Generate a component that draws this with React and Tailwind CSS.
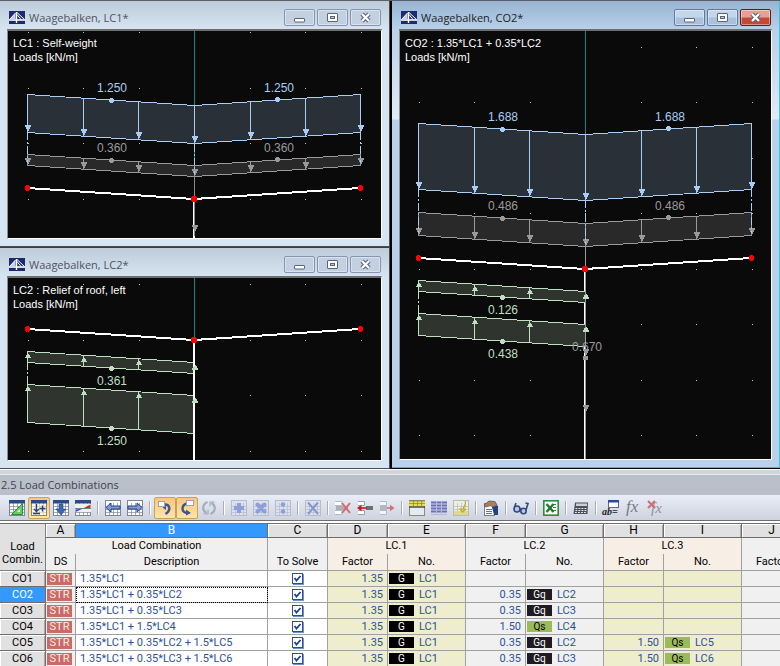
import React from "react";

const BLUE = { line: "#a9cdf3", fill: "#2a3038" };
const GREY = { line: "#9a9a9c", fill: "#292929" };
const GREEN = { line: "#bfdfc1", fill: "#2f342f" };

const BridgeIcon = () => (
  <svg width="16" height="13" viewBox="0 0 16 13" className="block shrink-0" aria-hidden="true">
    <rect width="16" height="13" fill="#1d2a72" />
    <path d="M6.500 2L1 8H6.500Z" fill="#c9d0e8" />
    <path d="M0 9H16" stroke="#fff" strokeWidth="1.600" />
    <path d="M7.500 1V12" stroke="#fff" strokeWidth="1.400" />
    <path d="M8 1.500L15.500 8.500M8 3.500L12 8.500M6.500 2L0.500 8.500" stroke="#fff" strokeWidth="1" fill="none" />
  </svg>
);

function Arrow({ x, y, up, color }) {
  const d = up
    ? `M${x} ${y}h1v1h1v1h1v2h1v1h-6v-1h1v-2h1v-1h1z`
    : `M${x - 2} ${y}h6v2h-1v2h-1v2h-2v-2h-1v-2h-1z`;
  return <path d={d} fill={color} />;
}

/* A distributed load over one or both halves of the roof. */
function Band({ x, top, h, c, up, both, label, labelY, dashTo }) {
  const mid = x + 167;
  const end = x + 333;
  const xs = both ? [0, 56, 111, 167, 223, 278, 333] : [0, 56, 111, 167];
  const yAt = (dx) => Math.round(top + (dx <= 167 ? dx : 333 - dx) * 0.066);
  const outline = both
    ? `M${x} ${top}L${mid} ${top + 11}L${end} ${top}V${top + h}L${mid} ${top + h + 11}L${x} ${top + h}Z`
    : `M${x} ${top}L${mid} ${top + 11}V${top + h + 11}L${x} ${top + h}Z`;
  const marks = both ? [84, 250] : [84];
  const labels = both ? [70, 237] : [70];
  return (
    <g>
      <path d={outline} transform="translate(.5 .5)" fill={c.fill} stroke={c.line} />
      {xs.map((dx) => (
        <g key={dx}>
          <path d={`M${x + dx + 0.5} ${yAt(dx)}v${h}`} stroke={c.line} />
          <Arrow x={x + dx} y={up ? yAt(dx) + 2 : yAt(dx) + h - 7} up={up} color={c.line} />
        </g>
      ))}
      {marks.map((dx) => (
        <circle key={dx} cx={x + dx + 0.5} cy={yAt(dx) + (up ? h : 0) + 0.5} r="2.5" fill={c.line} />
      ))}
      {dashTo &&
        [0, 167, both ? 333 : 0].map((dx, i) => (
          <path
            key={i}
            d={`M${x + dx + 0.5} ${yAt(dx) + h}V${dashTo + yAt(dx) - top}`}
            stroke={c.line}
            strokeDasharray="8 2 2 2"
          />
        ))}
      {labels.map((dx) => (
        <text key={dx} x={x + dx} y={labelY} fontSize="12" fill={c.line}>
          {label}
        </text>
      ))}
    </g>
  );
}

function Beam({ x, y }) {
  return (
    <g>
      <path d={`M${x} ${y}L${x + 167} ${y + 11}L${x + 333} ${y}`} stroke="#fff" strokeWidth="2" fill="none" />
      <path d={`M${x + 167} ${y + 11}V600`} stroke="#fff" strokeWidth="2" />
    </g>
  );
}

const Joints = ({ x, y }) => (
  <g fill="#ff0000">
    <circle cx={x + 0.5} cy={y} r="3" />
    <circle cx={x + 167} cy={y + 11} r="3" />
    <circle cx={x + 333.5} cy={y} r="3" />
  </g>
);

function GridDots({ x, ys }) {
  return (
    <g fill="#b9c9b9">
      {ys.map((y) =>
        [1, 56, 112, 167, 223, 278, 334].map((dx) => <rect key={`${dx}-${y}`} x={x + dx} y={y} width="1" height="1" />)
      )}
    </g>
  );
}

function Caption({ lines }) {
  return lines.map((t, i) => (
    <text key={t} x="5" y={16 + i * 14} fontSize="11" fill="#fff">
      {t}
    </text>
  ));
}

const Canvas = ({ title, children }) => (
  <svg
    role="img"
    aria-label={title}
    className="block h-full w-full font-['Liberation_Sans',Arial,sans-serif]"
    shapeRendering="crispEdges"
  >
    {children}
  </svg>
);

function SelfWeight() {
  return (
    <Canvas title="LC1 loads">
      <GridDots x={19} ys={[1, 57, 112, 168]} />
      <Beam x={19} y={157} />
      <Band x={19} top={123} h={11} c={GREY} both label="0.360" labelY={121} />
      <Band x={19} top={63} h={38} c={BLUE} both label="1.250" labelY={61} dashTo={132} />
      <path d="M186.500 0V74M186.500 113V134" stroke="#0c8a86" />
      <path d="M186.500 113V134" stroke={BLUE.line} strokeDasharray="8 2 2 2" />
      <path d="M186.500 145V205" stroke="#8a8a8a" />
      <Arrow x={186} y={194} color={GREY.line} />
      <Joints x={19} y={157} />
      <Caption lines={["LC1 : Self-weight", "Loads [kN/m]"]} />
    </Canvas>
  );
}

function RoofRelief() {
  return (
    <Canvas title="LC2 loads">
      <GridDots x={19} ys={[6, 62, 117, 173]} />
      <path d="M186.500 0V62" stroke="#0c8a86" />
      <Beam x={19} y={51} />
      <Band x={19} top={73} h={11} c={GREEN} up label="0.361" labelY={107} dashTo={106} />
      <Band x={19} top={106} h={38} c={GREEN} up label="1.250" labelY={167} />
      <path d="M186 62V190" stroke="#fff" strokeWidth="2" />
      <Arrow x={186} y={87} up color={GREEN.line} />
      <Arrow x={186} y={120} up color={GREEN.line} />
      <Joints x={19} y={51} />
      <Caption lines={["LC2 : Relief of roof, left", "Loads [kN/m]"]} />
    </Canvas>
  );
}

function Combination() {
  return (
    <Canvas title="CO2 loads">
      <GridDots x={18} ys={[16, 71, 127, 182, 238, 293, 349, 404]} />
      <Beam x={18} y={227} />
      <Band x={18} top={181} h={23} c={GREY} both label="0.486" labelY={179} />
      <Band x={18} top={92} h={66} c={BLUE} both label="1.688" labelY={90} dashTo={202} />
      <Band x={18} top={249} h={11} c={GREEN} up label="0.126" labelY={283} dashTo={282} />
      <Band x={18} top={282} h={22} c={GREEN} up label="0.438" labelY={327} />
      <path d="M185.500 0V103" stroke="#0c8a86" />
      <path d="M185.500 214V430" stroke="#9a9a9c" />
      <Arrow x={185} y={263} up color={GREEN.line} />
      <Arrow x={185} y={296} up color={GREEN.line} />
      <Arrow x={185} y={318} color={GREY.line} />
      <rect x="183" y="325" width="5" height="4" fill={GREY.line} />
      <Arrow x={185} y={374} color={GREY.line} />
      <text x="172" y="320" fontSize="12" fill={GREY.line}>
        0.670
      </text>
      <Joints x={18} y={227} />
      <Caption lines={["CO2 : 1.35*LC1 + 0.35*LC2", "Loads [kN/m]"]} />
    </Canvas>
  );
}

const GLYPHS = {
  Minimize: <rect x="9.500" y="8.500" width="10" height="3.500" rx="0.500" fill="#fff" stroke="#5c6478" />,
  Maximize: (
    <g fill="#fff" stroke="#5c6478">
      <rect x="9.500" y="3.500" width="10" height="8" rx="0.500" />
      <rect x="12.500" y="6.500" width="4" height="2" fill="#b9c8dc" />
    </g>
  ),
  Close: (
    <g fill="none">
      <path d="M11 4L18 11M18 4L11 11" stroke="#5c6478" strokeWidth="4.400" />
      <path d="M11 4L18 11M18 4L11 11" stroke="#fff" strokeWidth="2.200" />
    </g>
  ),
};

function WindowButton({ name, active }) {
  const tone =
    active && name === "Close"
      ? "border-[#5d1f24] bg-linear-to-b from-[#e5a294] from-45% to-[#c04a34] to-55%"
      : active
        ? "border-[#62799b] bg-linear-to-b from-[#c3d6ea] from-45% to-[#a9c1dc] to-55%"
        : "border-[#8794b0] bg-[#c2d0e1]";
  return (
    <button
      type="button"
      aria-label={name}
      className={`h-[17px] w-[31px] rounded-xs border shadow-[inset_0_0_0_1px_#ffffff66] ${tone}`}
    >
      <svg width="29" height="15" viewBox="0 0 29 15" className="block">
        {GLYPHS[name]}
      </svg>
    </button>
  );
}

function DocWindow({ title, active, className, children }) {
  const skin = active
    ? "border-r-[#3cc6e4] border-b-[#2fc3e0] bg-[linear-gradient(to_bottom,#98b4d2_0,#b9d1ea_29px,#e0ebf7_118px,#b9d1ea_119px)]"
    : "border-r-[#4a4d52] border-b-[#4a4d52] bg-[linear-gradient(to_bottom,#becbd9_0,#d7e4f2_29px)]";
  return (
    <section className={`flex min-w-0 flex-col border-r border-b pr-[7px] pb-[7px] pl-[7px] ${skin} ${className}`}>
      <header className="flex h-[28px] shrink-0 items-center gap-1 pt-[5px] pr-px pl-[2px]">
        <BridgeIcon />
        <h2
          className={`flex-1 truncate font-['Open_Sans','Noto_Sans',sans-serif] text-[11px] leading-4 ${active ? "text-[#1b1f26]" : "text-[#4d545e]"}`}
        >
          {title}
        </h2>
        <div className="flex gap-[2px]">
          <WindowButton name="Minimize" active={active} />
          <WindowButton name="Maximize" active={active} />
          <WindowButton name="Close" active={active} />
        </div>
      </header>
      <div className="min-h-0 flex-1 border-t-2 border-r border-b border-l border-t-[#6e6e6e] border-r-white border-b-white border-l-[#8c8c8c] bg-[#0a0a0a]">
        {children}
      </div>
    </section>
  );
}

/* Small spreadsheet used as the base of many toolbar icons. */
const Sheet = ({ head = "#2c4a86", line = "#7d8794", bg = "#fff" }) => (
  <g>
    <rect x="0.500" y="0.500" width="15" height="15" fill={bg} stroke={line} />
    <path d="M0.500 6.500H15.500M0.500 9.500H15.500M0.500 12.500H15.500M4.500 3V15.500M8.500 3V15.500M12.500 3V15.500" stroke={line} strokeWidth="0.700" fill="none" />
    {head && <rect width="16" height="3.500" fill={head} />}
  </g>
);
const PaleSheet = () => <Sheet head="" line="#b5bccb" bg="#dce1ec" />;

const ICONS = {
  units: (
    <g>
      <Sheet />
      <path d="M2.500 14.500L13.500 3.500V14.500Z" fill="#63cf63" stroke="#2b8f2f" />
      <path d="M8 12L11 9V12Z" fill="#e9fbe9" />
    </g>
  ),
  insertRow: (
    <g>
      <Sheet />
      <rect x="1" y="4" width="14" height="11" fill="#fff3d8" opacity=".6" />
      <path d="M5.500 4V11M3 9L5.500 11.500L8 9M2 13.500H9M8.500 8.500H14.500M11.500 5.500V11.500" stroke="#25407f" strokeWidth="1.300" fill="none" />
    </g>
  ),
  down: (
    <g>
      <Sheet />
      <path d="M6 4H10V9H13L8 15L3 9H6Z" fill="#3f66b4" stroke="#25407f" strokeWidth=".6" />
    </g>
  ),
  diagram: (
    <g>
      <Sheet />
      <rect x="0" y="4" width="16" height="8" fill="#eef0f4" />
      <path d="M0.500 12V9.500L8 8.500Z" fill="#2747d0" />
      <path d="M15.500 4.500V8L8 8.500Z" fill="#e02222" />
      <path d="M0 8.500H16" stroke="#555" strokeWidth=".7" />
    </g>
  ),
  left: (
    <g>
      <Sheet head="" />
      <path d="M1 7.500L6 3V6H15V9H6V12Z" fill="#7f9be0" stroke="#25407f" />
    </g>
  ),
  right: (
    <g>
      <Sheet head="" />
      <path d="M15 7.500L10 3V6H1V9H10V12Z" fill="#7f9be0" stroke="#25407f" />
    </g>
  ),
  undoBox: (
    <g>
      <path d="M7 4.500C13 4 14.500 10 8.500 14" stroke="#3c5690" strokeWidth="2.400" fill="none" />
      <path d="M5.500 7.500L9 6V10Z" fill="#3c5690" />
      <rect x="1.500" y="1.500" width="6" height="5" fill="#fff" stroke="#9aa4ba" />
    </g>
  ),
  redoBox: (
    <g>
      <path d="M8 3.500C2 5 2 12 8 13" stroke="#3c5690" strokeWidth="2.400" fill="none" />
      <path d="M7 9.500L12 13L7 15.500Z" fill="#3c5690" />
      <rect x="7.500" y="0.500" width="7" height="5" fill="#fff" stroke="#9aa4ba" />
    </g>
  ),
  refresh: (
    <g fill="none" stroke="#a2adbd" strokeWidth="2.200">
      <path d="M6.500 2C0.500 4.500 1.500 11 5.500 13M9.500 14C15.500 11.500 14.500 5 10.500 3" />
      <path d="M2.500 14H7V9.500M13.500 2H9V6.500" strokeWidth="1.200" />
    </g>
  ),
  add: (
    <g>
      <PaleSheet />
      <path d="M8 3V13M3 8H13" stroke="#8c9fdc" strokeWidth="4" />
    </g>
  ),
  multiply: (
    <g>
      <PaleSheet />
      <path d="M4.500 4.500L11.500 11.500M11.500 4.500L4.500 11.500" stroke="#8c9fdc" strokeWidth="4" strokeLinecap="round" />
    </g>
  ),
  divide: (
    <g>
      <PaleSheet />
      <circle cx="8" cy="4.500" r="2.300" fill="#8c9fdc" />
      <circle cx="8" cy="11.500" r="2.300" fill="#8c9fdc" />
    </g>
  ),
  clear: (
    <g>
      <PaleSheet />
      <path d="M3 2.500L13 14M13 2.500L3 14" stroke="#8496cc" strokeWidth="2" />
    </g>
  ),
  deleteRow: (
    <g>
      <path d="M0 1.500H7V5.500H0M0 10.500H7V14.500H0" fill="#fff" stroke="#b4bac5" />
      <rect x="1" y="6" width="12" height="4" fill="#a9afb8" />
      <path d="M7 3L15 13M15 3L7 13" stroke="#d46a72" strokeWidth="2" />
    </g>
  ),
  rowIn: (
    <g>
      <path d="M1 1.500H7.500V5.500H1M1 10.500H7.500V14.500H1" fill="#fff" stroke="#9ba2ad" />
      <rect x="9" y="6" width="7" height="4" fill="#6b6f76" />
      <path d="M10 8H3" stroke="#c01c1c" strokeWidth="1.600" />
      <path d="M0 8L4.500 4.800V11.200Z" fill="#c01c1c" />
    </g>
  ),
  rowOut: (
    <g>
      <path d="M1 1.500H7.500V5.500H1M1 10.500H7.500V14.500H1" fill="#f4f5f8" stroke="#b4bac5" />
      <rect x="1" y="6" width="7" height="4" fill="#b3b8c0" />
      <path d="M8 8H12" stroke="#cf727a" strokeWidth="1.600" />
      <path d="M15.500 8L11 4.800V11.200Z" fill="#cf727a" />
    </g>
  ),
  yellowTable: (
    <g>
      <rect x="0.500" y="0.500" width="15" height="15" fill="#e4ebf2" stroke="#8b8b6a" />
      <rect y="1" width="16" height="5.500" fill="#e9dc59" />
      <path d="M0 1H16M0 3.500H16M4.500 1V6M8.500 1V6M12.500 1V6" stroke="#8a8335" strokeWidth=".7" />
      <path d="M0 7H16" stroke="#333" strokeWidth="1.300" />
    </g>
  ),
  blueTable: (
    <g>
      <rect y="1" width="16" height="14" fill="#d3d6ee" />
      <path d="M0 2.500H16M0 5.500H16M0 8.500H16M0 11.500H16" stroke="#6d70b8" strokeWidth="2" />
      <path d="M0 14.500H16M5.500 1V15M10.500 1V15" stroke="#b6bad6" />
    </g>
  ),
  pick: (
    <g>
      <Sheet head="" line="#b7bda9" bg="#eceee8" />
      <rect x="1" y="11" width="14" height="4" fill="#dfd88c" />
      <path d="M12 1C14 5 10 6 10.500 9H7L9.500 12L12.500 9" stroke="#b8a93a" strokeWidth="1.200" fill="#ecd95a" />
    </g>
  ),
  properties: (
    <g>
      <rect x="1.500" y="3.500" width="10" height="12" fill="#fff" stroke="#7a7f88" />
      <path d="M3 9.500H9M3 11.500H9M3 13.500H9" stroke="#6c7687" />
      <path d="M1 5L6 1L12 1.500L14 5L10 8L8 5.500L2.500 7Z" fill="#a88060" stroke="#5b4636" strokeWidth=".7" />
      <path d="M9 7L15 5.500V15H11Z" fill="#27437f" />
    </g>
  ),
  glasses: (
    <g fill="#b6c8ea" stroke="#33497f" strokeWidth="1.600">
      <circle cx="4" cy="9" r="3" />
      <circle cx="10.500" cy="11" r="2.700" />
      <path d="M6.500 8.500L8.500 9.500M1.500 7L3 3M13 10L15 3.500L12.500 3" fill="none" />
    </g>
  ),
  excel: (
    <g>
      <rect x="0.800" y="0.800" width="14.400" height="14.400" fill="#fff" stroke="#2f8a3a" strokeWidth="1.600" />
      <path d="M10 4.500H13M10 7.500H13M10 10.500H13" stroke="#2f8a3a" />
      <path d="M3.500 4L10.500 12M10.500 4L3.500 12" stroke="#1f7a2d" strokeWidth="2.400" />
    </g>
  ),
  calculator: (
    <g>
      <path d="M2 2.500H15L14.500 14H0.500Z" fill="#4d515a" />
      <rect x="3" y="3.500" width="11" height="2.500" fill="#c7d3dc" />
      <path d="M2.500 8.500H14M2.500 10.500H14M2 12.500H14" stroke="#e6e8ec" strokeWidth="1.100" strokeDasharray="1.800 1.200" />
    </g>
  ),
  formulaName: (
    <g>
      <rect x="5.500" y="0.500" width="10" height="7" fill="#fff" stroke="#667" />
      <rect x="5" width="11" height="2.500" fill="#2c4a9a" />
      <text x="-1" y="15" fontSize="10" fontWeight="bold" fontStyle="italic" fill="#222">
        ab=
      </text>
    </g>
  ),
  fx: (
    <text x="1" y="12" fontSize="17" fontStyle="italic" fill="#757b85">
      fx
    </text>
  ),
  noFx: (
    <g>
      <text x="4" y="13" fontSize="15" fontStyle="italic" fill="#8d939d">
        fx
      </text>
      <path d="M1 1L8 8M8 1L1 8" stroke="#d46a72" strokeWidth="2" />
    </g>
  ),
};

const TOOL_GROUPS = [
  ["units", "insertRow", "down", "diagram"],
  ["left", "right"],
  ["undoBox", "redoBox", "refresh"],
  ["add", "multiply", "divide"],
  ["clear"],
  ["deleteRow", "rowIn", "rowOut"],
  ["yellowTable", "blueTable", "pick"],
  ["properties"],
  ["glasses"],
  ["excel"],
  ["calculator"],
  ["formulaName", "fx", "noFx"],
];
const PRESSED = ["insertRow", "undoBox", "redoBox"];

function Toolbar() {
  return (
    <div
      role="toolbar"
      aria-label="Table tools"
      className="flex h-[25px] items-center overflow-hidden bg-linear-to-b from-[#e9edf7] to-[#cdd3df] pl-[6px]"
    >
      {TOOL_GROUPS.map((group, i) => (
        <React.Fragment key={group[0]}>
          {i > 0 && <span className="mx-[3px] h-[14px] w-[2px] shrink-0 border-r border-l border-r-white border-l-[#a7adba]" />}
          {group.map((name) => (
            <button
              key={name}
              type="button"
              aria-label={name}
              aria-pressed={PRESSED.includes(name)}
              className={`flex h-[22px] w-[22px] shrink-0 items-center justify-center rounded-xs border ${
                PRESSED.includes(name)
                  ? "border-[#c8a25c] bg-linear-to-b from-[#fbc77c] to-[#ffe6a4]"
                  : "border-transparent"
              }`}
            >
              <svg width="16" height="16" viewBox="0 0 16 16" className="block overflow-visible font-['Liberation_Serif',serif]">
                {ICONS[name]}
              </svg>
            </button>
          ))}
        </React.Fragment>
      ))}
    </div>
  );
}

const ROWS = [
  { id: "CO1", desc: "1.35*LC1", loads: [["1.35", "G", "LC1"]] },
  { id: "CO2", desc: "1.35*LC1 + 0.35*LC2", loads: [["1.35", "G", "LC1"], ["0.35", "Gq", "LC2"]] },
  { id: "CO3", desc: "1.35*LC1 + 0.35*LC3", loads: [["1.35", "G", "LC1"], ["0.35", "Gq", "LC3"]] },
  { id: "CO4", desc: "1.35*LC1 + 1.5*LC4", loads: [["1.35", "G", "LC1"], ["1.50", "Qs", "LC4"]] },
  { id: "CO5", desc: "1.35*LC1 + 0.35*LC2 + 1.5*LC5", loads: [["1.35", "G", "LC1"], ["0.35", "Gq", "LC2"], ["1.50", "Qs", "LC5"]] },
  { id: "CO6", desc: "1.35*LC1 + 0.35*LC3 + 1.5*LC6", loads: [["1.35", "G", "LC1"], ["0.35", "Gq", "LC3"], ["1.50", "Qs", "LC6"]] },
];

const TAGS = {
  G: "bg-black text-white",
  Gq: "bg-[#1f1b22] text-white",
  Qs: "bg-[#9bbb59] text-black",
};
const LINE = "border-[#a0a0a0]";

function LoadCells({ load, tint }) {
  const bg = tint ? "bg-[#eeeecf]" : "bg-[#f0f0f0]";
  return (
    <>
      <td className={`border-r border-b p-0 pr-1 text-right ${LINE} ${bg}`}>{load && load[0]}</td>
      <td className={`border-r border-b p-0 ${LINE} ${bg}`}>
        {load && (
          <div className="flex h-[15px] items-center gap-[5px] pl-px">
            <span className={`h-[11px] w-[25px] text-center text-[10px] leading-[11px] ${TAGS[load[1]]}`}>{load[1]}</span>
            {load[2]}
          </div>
        )}
      </td>
    </>
  );
}

function CombinationTable() {
  const th = "p-0 font-normal text-black";
  return (
    <div className="overflow-hidden border-t border-[#6e6e6e]">
      <table className="w-[802px] table-fixed border-separate border-spacing-0 font-['Roboto','Liberation_Sans',sans-serif] text-[11px] leading-[14px] text-[#2b50a0]">
        <colgroup>
          <col className="w-[46px]" />
          <col className="w-[30px]" />
          <col className="w-[192px]" />
          <col className="w-[60px]" />
          <col className="w-[60px]" />
          <col className="w-[78px]" />
          <col className="w-[60px]" />
          <col className="w-[78px]" />
          <col className="w-[60px]" />
          <col className="w-[78px]" />
          <col className="w-[60px]" />
        </colgroup>
        <thead>
          <tr className="h-[14px]">
            <th
              rowSpan={3}
              scope="col"
              className="border-r border-b border-[#808080] bg-[#e1e1e1] p-0 pt-3 leading-[13px] font-normal text-black"
            >
              Load
              <br />
              Combin.
            </th>
            {["A", "B", "C", "D", "E", "F", "G", "H", "I", "J"].map((c) => (
              <th
                key={c}
                scope="col"
                className={`h-[14px] border-r border-b border-[#6e6e6e] p-0 text-[12px] leading-[13px] font-normal ${
                  c === "B" ? "bg-[#3399ff] text-white" : "bg-[#e1e1e1] text-black shadow-[inset_1px_1px_0_#fff,inset_-1px_0_0_#a8a8a8]"
                }`}
              >
                {c}
              </th>
            ))}
          </tr>
          <tr className="h-[16px]">
            <th colSpan={2} className={`${th} border-r bg-[#f0f0f0] ${LINE}`}>Load Combination</th>
            <th className={`${th} border-r bg-[#f0f0f0] ${LINE}`} />
            <th colSpan={2} className={`${th} border-r bg-[#f7efe6] ${LINE}`}>LC.1</th>
            <th colSpan={2} className={`${th} border-r bg-[#f0f0f0] ${LINE}`}>LC.2</th>
            <th colSpan={2} className={`${th} border-r bg-[#f7efe6] ${LINE}`}>LC.3</th>
            <th className={`${th} bg-[#f0f0f0]`} />
          </tr>
          <tr className="h-[17px]">
            {["DS", "Description", "To Solve", "Factor", "No.", "Factor", "No.", "Factor", "No.", "Factor"].map((t, i) => (
              <th
                key={i}
                scope="col"
                className={`${th} border-r border-b ${LINE} ${[3, 4, 7, 8].includes(i) ? "bg-[#f7efe6]" : "bg-[#f0f0f0]"}`}
              >
                {t}
              </th>
            ))}
          </tr>
        </thead>
        <tbody>
          {ROWS.map((row) => {
            const current = row.id === "CO2";
            return (
              <tr key={row.id} className="h-[16px]">
                <th
                  scope="row"
                  className={`h-[16px] border-r border-b border-[#6e6e6e] p-0 font-normal ${
                    current ? "bg-[#3399ff] text-white" : "bg-[#e1e1e1] text-black shadow-[inset_1px_1px_0_#fff,inset_-1px_0_0_#a8a8a8]"
                  }`}
                >
                  {row.id}
                </th>
                <td className={`border-r border-b bg-[#f0f0f0] p-0 pl-px ${LINE}`}>
                  <span className="block h-[12px] w-[25px] bg-[#cb6a67] text-center text-[11px] leading-[12px] text-[#ffe9e9]">STR</span>
                </td>
                <td
                  className={`border-r border-b bg-white p-0 pl-1 ${LINE} ${
                    current ? "outline-1 -outline-offset-1 outline-dotted outline-black" : ""
                  }`}
                >
                  {row.desc}
                </td>
                <td className={`border-r border-b bg-white p-0 ${LINE}`}>
                  <label className="relative mx-auto block h-[11px] w-[11px]">
                    <input
                      type="checkbox"
                      defaultChecked
                      aria-label={`Solve ${row.id}`}
                      className="peer block h-[11px] w-[11px] appearance-none border border-[#2b50a0] bg-white shadow-[1px_1px_0_#6f8fd0]"
                    />
                    <svg viewBox="0 0 11 11" className="pointer-events-none absolute inset-0 hidden h-[11px] w-[11px] peer-checked:block">
                      <path d="M2.500 5L4.500 7.500L8.500 3" stroke="#1d3f96" strokeWidth="1.800" fill="none" />
                    </svg>
                  </label>
                </td>
                <LoadCells load={row.loads[0]} tint />
                <LoadCells load={row.loads[1]} />
                <LoadCells load={row.loads[2]} tint />
                <td className={`border-r border-b bg-[#f0f0f0] ${LINE}`} />
              </tr>
            );
          })}
        </tbody>
      </table>
    </div>
  );
}

export default function App() {
  return (
    <main className="w-full overflow-hidden bg-[#d0d4dc]">
      <div className="grid grid-cols-2 border-t border-[#5b6066] bg-[#3a3d42]">
        <div className="flex min-w-0 flex-col gap-px">
          <DocWindow title="Waagebalken, LC1*" className="h-[246px]">
            <SelfWeight />
          </DocWindow>
          <DocWindow title="Waagebalken, LC2*" className="h-[221px]">
            <RoofRelief />
          </DocWindow>
        </div>
        <div className="flex min-w-0 flex-col border-b border-l-2 border-black">
          <DocWindow title="Waagebalken, CO2*" active className="flex-1">
            <Combination />
          </DocWindow>
        </div>
      </div>
      <section>
        <div className="h-[6px] border-y border-t-white border-b-[#e8ebf0] bg-[#d0d4dc]" />
        <h1 className="h-[20px] bg-[#b9c0ca] pl-px font-['Open_Sans','Noto_Sans',sans-serif] text-[11px] leading-[20px] text-[#3d434d]">
          2.5 Load Combinations
        </h1>
        <Toolbar />
        <div className="h-[3px] border-t border-[#6e6e6e] bg-white" />
        <CombinationTable />
      </section>
    </main>
  );
}
